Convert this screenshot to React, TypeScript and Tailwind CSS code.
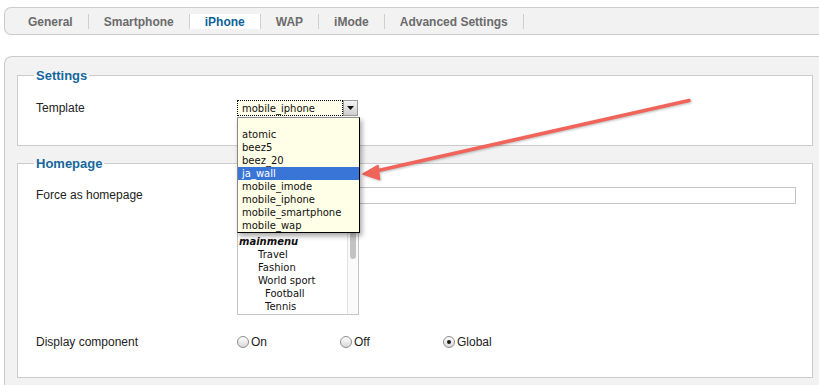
const tabs = ['General', 'Smartphone', 'iPhone', 'WAP', 'iMode', 'Advanced Settings']

const templates = ['atomic', 'beez5', 'beez_20', 'ja_wall', 'mobile_imode', 'mobile_iphone', 'mobile_smartphone', 'mobile_wap']

const menuItems: { label: string; indent: string; head?: boolean }[] = [
  { label: 'mainmenu', indent: 'pl-[1px]', head: true },
  { label: 'Travel', indent: 'pl-[20px]' },
  { label: 'Fashion', indent: 'pl-[20px]' },
  { label: 'World sport', indent: 'pl-[20px]' },
  { label: 'Football', indent: 'pl-[27px]' },
  { label: 'Tennis', indent: 'pl-[27px]' },
]

function Radio({ label, checked }: { label: string; checked?: boolean }) {
  return (
    <div className="w-[103px] flex items-center gap-[2px]">
      <span className="w-[12px] h-[12px] rounded-full border border-[#8c8c8c] bg-gradient-to-b from-white to-[#d9d9d9] flex items-center justify-center">
        {checked && <span className="w-[4px] h-[4px] rounded-full bg-[#1a1a1a]" />}
      </span>
      <span>{label}</span>
    </div>
  )
}

function TemplateSelect() {
  return (
    <div className="relative w-[121px] h-[16px] flex">
      <div className="flex-1 bg-[#fffee8] border border-dotted border-black pl-[4px] flex items-center font-['DejaVu_Sans',sans-serif] text-[10px] text-[#111]">
        mobile_iphone
      </div>
      <div className="w-[15px] bg-gradient-to-b from-[#f4f4f4] to-[#cfcfcf] border border-[#9a9a9a] flex items-center justify-center">
        <svg width="7" height="4" viewBox="0 0 7 4">
          <path d="M0 0h7L3.5 4z" fill="#111" />
        </svg>
      </div>
      <div className="absolute z-10 left-0 top-[17px] w-[123px] bg-[#fffee6] border border-[#8a8a8a] border-r-black border-b-black shadow-[2px_3px_5px_rgba(0,0,0,0.35)] font-['DejaVu_Sans',sans-serif] text-[10px] text-[#111]">
        <div className="h-[10px]" />
        {templates.map((t) => (
          <div
            key={t}
            className={
              t === 'ja_wall'
                ? 'h-[13px] leading-[13px] pl-[4px] bg-[#3875d7] text-white'
                : 'h-[13px] leading-[13px] pl-[4px]'
            }
          >
            {t}
          </div>
        ))}
      </div>
    </div>
  )
}

export default function App() {
  return (
    <div className="relative w-[819px] h-[385px] overflow-hidden bg-white font-['Liberation_Sans',Arial,sans-serif] text-[12px] text-[#222]">
      {/* tab strip */}
      <div className="mt-[7px] ml-[4px] h-[28px] border border-r-0 border-[#cbcbcb] rounded-l-[7px] bg-[#f2f2f2] flex items-start pt-[6px] pl-[8px]">
        {tabs.map((t) => (
          <div
            key={t}
            className={
              t === 'iPhone'
                ? 'h-[15px] px-[15px] border-r border-[#cfcfcf] flex items-center font-bold bg-white text-[#0f6399]'
                : 'h-[15px] px-[15px] border-r border-[#cfcfcf] flex items-center font-bold text-[#6b6b6b]'
            }
          >
            {t}
          </div>
        ))}
      </div>

      {/* panel */}
      <div className="mt-[21px] ml-[4px] h-[400px] border-t border-l border-[#cbcbcb] rounded-tl-[8px] bg-[#f2f2f2] pl-[12px] pr-[6px] pt-[11px]">
        <fieldset className="border border-[#cbcbcb] bg-white pl-[18px] pr-[16px]">
          <legend className="-ml-[2px] px-[2px] text-[13px] leading-[15px] font-bold text-[#14679c]">Settings</legend>
          <div className="pt-[16px] pb-[28px] flex items-center">
            <div className="w-[201px]">Template</div>
            <TemplateSelect />
          </div>
        </fieldset>

        <fieldset className="mt-[10px] border border-[#cbcbcb] bg-white pl-[18px] pr-[16px]">
          <legend className="-ml-[2px] px-[2px] text-[13px] leading-[15px] font-bold text-[#14679c]">Homepage</legend>
          <div className="pt-[16px] flex">
            <div className="w-[201px] leading-[17px]">Force as homepage</div>
            <div className="flex flex-col">
              <div className="w-[559px] h-[17px] border border-[#c4c4c4] bg-white" />
              <div className="mt-[1px] w-[122px] h-[110px] border border-[#c4c4c4] bg-white flex overflow-hidden">
                <div className="flex-1 pt-[29px] font-['DejaVu_Sans',sans-serif] text-[10px] text-[#111]">
                  {menuItems.map((m) => (
                    <div
                      key={m.label}
                      className={m.head ? `h-[13px] leading-[13px] ${m.indent} font-bold italic` : `h-[13px] leading-[13px] ${m.indent}`}
                    >
                      {m.label}
                    </div>
                  ))}
                </div>
                <div className="w-[11px] border-l border-[#e3e3e3] bg-[#fafafa] pt-[26px] flex justify-center">
                  <div className="w-[6px] h-[27px] rounded-full bg-[#c3c3c3]" />
                </div>
              </div>
            </div>
          </div>
          <div className="mt-[19px] pb-[27px] h-[43px] flex items-start">
            <div className="w-[201px] h-[16px] flex items-center">Display component</div>
            <div className="h-[16px] flex items-center">
              <Radio label="On" />
              <Radio label="Off" />
              <Radio label="Global" checked />
            </div>
          </div>
        </fieldset>
      </div>

      {/* annotation arrow */}
      <svg className="absolute left-0 top-0 pointer-events-none" width="819" height="385" viewBox="0 0 819 385">
        <g style={{ filter: 'drop-shadow(1px 1px 1px rgba(0,0,0,0.25))' }}>
          <line x1="689" y1="100.5" x2="376" y2="171" stroke="#f0645a" strokeWidth="3.5" strokeLinecap="round" />
          <path d="M363 174 L378 165.5 L379.5 179.5 Z" fill="#f0645a" stroke="#f0645a" strokeWidth="1.5" strokeLinejoin="round" />
        </g>
      </svg>
    </div>
  )
}
